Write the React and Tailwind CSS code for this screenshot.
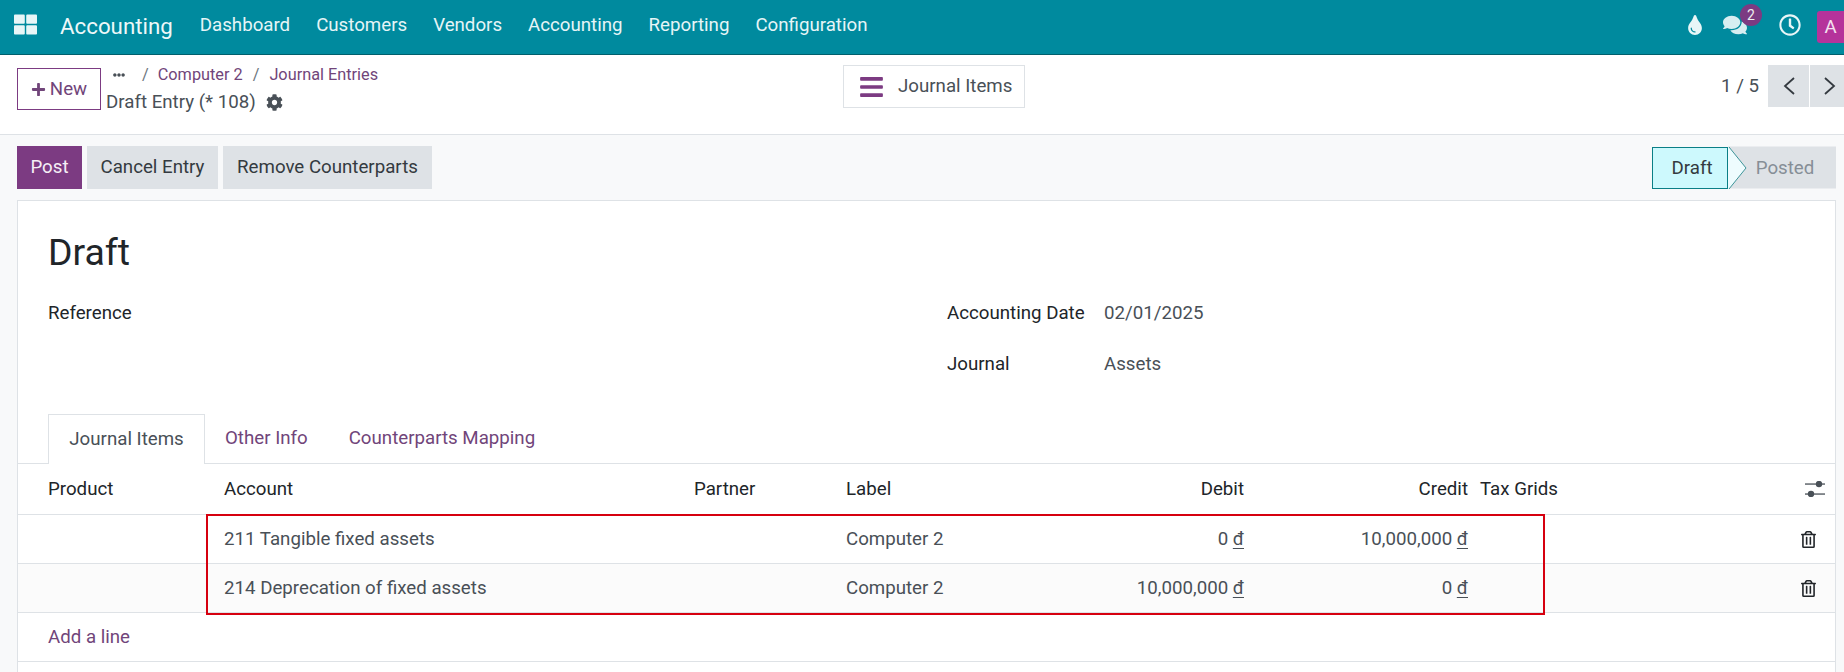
import React from "react";
import { FaThLarge, FaTint, FaComments, FaRegClock, FaCog, FaPlus, FaEllipsisH, FaBars, FaRegTrashAlt } from "react-icons/fa";

const navItems = ["Dashboard", "Customers", "Vendors", "Accounting", "Reporting", "Configuration"];
const cols = "grid grid-cols-[200px_470px_152px_210px_200px_224px_1fr_44px] items-center";

const rows = [
  { account: "211 Tangible fixed assets", debit: "0", credit: "10,000,000", bg: "bg-white" },
  { account: "214 Deprecation of fixed assets", debit: "10,000,000", credit: "0", bg: "bg-[#fbfbfb]" },
];

function Money({ v }) {
  return (
    <span>
      {v} <span className="underline underline-offset-[3px]">đ</span>
    </span>
  );
}

function Chevron({ dir }) {
  return (
    <svg width="14" height="20" viewBox="0 0 14 20" fill="none" stroke="#343a40" strokeWidth="1.8">
      <path d={dir === "left" ? "M12 2 L3 10 L12 18" : "M2 2 L11 10 L2 18"} />
    </svg>
  );
}

export default function App() {
  return (
    <div className="relative h-[672px] w-[1844px] overflow-hidden bg-[#f8f9fa] font-['Roboto',sans-serif] text-[18.7px] leading-[25px] text-[#495057]">
      <nav className="flex h-[55px] items-center border-b border-[#005f6c] bg-[#008a9e] text-[#e6f5f7]">
        <FaThLarge className="ml-[14px] h-[23px] w-[23px] -translate-y-[3px] text-[#e8f6f7]" />
        <span className="ml-[23px] -translate-y-[1px] text-[22.3px] text-[#edf8f9]">Accounting</span>
        <div className="ml-[27px] flex -translate-y-[2px] gap-[26px]">
          {navItems.map((n) => (
            <span key={n}>{n}</span>
          ))}
        </div>
        <div className="ml-auto flex -translate-y-[2px] items-center">
          <FaTint className="h-[20px] w-[20px] text-[#e8f6f7]" />
          <div className="relative ml-[18px]">
            <FaComments className="h-[24px] w-[24px] text-[#d6eef1]" />
            <span className="absolute -top-[9px] left-[17px] flex h-[22px] w-[22px] items-center justify-center rounded-full bg-[#7c3b82] text-[14px] text-[#eee]">2</span>
          </div>
          <FaRegClock className="ml-[32px] h-[22px] w-[22px] text-[#e8f6f7]" />
          <div className="ml-[16px] flex h-[32px] w-[27px] translate-y-[2px] items-center justify-center rounded-l-[3px] bg-[#b5339b] text-[#f3e3ef]">A</div>
        </div>
      </nav>

      <header className="flex h-[80px] items-start border-b border-[#dee2e6] bg-white pl-[17px] pt-[10px]">
        <button className="mt-[3px] flex h-[42px] w-[84px] items-center justify-center gap-[4px] border border-[#7c3b82] text-[#71457a]">
          <FaPlus className="h-[15px] w-[15px]" />
          New
        </button>
        <div className="ml-[5px] w-[341px]">
          <div className="-mt-[4px] flex h-[27px] items-center text-[16.3px] text-[#71457a]">
            <FaEllipsisH className="ml-[6px] h-[12px] w-[14px] text-[#495057]" />
            <span className="ml-[16px] text-[#6c757d]">/</span>
            <span className="ml-[9px]">Computer 2</span>
            <span className="ml-[10px] text-[#6c757d]">/</span>
            <span className="ml-[10px]">Journal Entries</span>
          </div>
          <div className="mt-[2px] flex items-center">
            <span>Draft Entry (* 108)</span>
            <FaCog className="ml-[10px] h-[17px] w-[17px] text-[#495057]" />
          </div>
        </div>
        <div className="ml-[396px] flex h-[43px] w-[182px] items-center border border-[#dee2e6] pl-[15px]">
          <FaBars className="h-[26px] w-[25px] text-[#7c3b82]" />
          <span className="ml-[14px]">Journal Items</span>
        </div>
        <div className="ml-auto flex items-center">
          <span className="mr-[9px]">1 / 5</span>
          <div className="flex h-[42px] w-[41px] items-center justify-center bg-[#dee2e6]">
            <Chevron dir="left" />
          </div>
          <div className="ml-[1px] flex h-[42px] w-[34px] items-center justify-center bg-[#dee2e6] pl-[6px]">
            <Chevron dir="right" />
          </div>
        </div>
      </header>

      <div className="flex h-[65px] items-start justify-between pl-[17px] pr-[8px] pt-[11px]">
        <div className="flex gap-[5px]">
          <button className="flex h-[43px] w-[65px] items-center justify-center bg-[#7c3b82] text-[#f5eff6]">Post</button>
          <button className="flex h-[43px] w-[131px] items-center justify-center bg-[#dee2e6] text-[#343a40]">Cancel Entry</button>
          <button className="flex h-[43px] w-[209px] items-center justify-center bg-[#dee2e6] text-[#343a40]">Remove Counterparts</button>
        </div>
        <div className="relative mt-[1px] flex h-[42px]">
          <div className="flex w-[76px] items-center justify-center border border-[#0a7f86] bg-[#cdf9fd] pl-[4px] text-[#343a40]">Draft</div>
          <div className="flex w-[108px] items-center justify-center bg-[#dee2e6] pl-[6px] -translate-y-[0.5px] text-[#868e96]">Posted</div>
          <svg className="absolute left-[76px] top-0" width="20" height="42" viewBox="0 0 20 42">
            <path d="M0 0 L1 0 L18 21 L1 42 L0 42 Z" fill="#eefcfe" />
            <path d="M1 0 L18 21 L1 42" fill="none" stroke="#3d9499" strokeWidth="1" />
          </svg>
        </div>
      </div>

      <main className="ml-[17px] w-[1819px] border border-[#dee2e6] bg-white">
        <div className="px-[30px] pt-[25px]">
          <h1 className="text-[37.4px] leading-[52px] text-[#212529]">Draft</h1>
          <div className="mt-[23px] flex h-[111px]">
            <div className="w-[899px] text-[#212529]">Reference</div>
            <div className="flex flex-col gap-[26px]">
              <div className="flex">
                <span className="w-[157px] text-[#212529]">Accounting Date</span>
                <span>02/01/2025</span>
              </div>
              <div className="flex">
                <span className="w-[157px] text-[#212529]">Journal</span>
                <span>Assets</span>
              </div>
            </div>
          </div>
        </div>

        <div className="mt-[2px] flex h-[50px] border-b border-[#dee2e6] pl-[30px]">
          <div className="flex h-[50px] w-[157px] items-center justify-center border border-b-0 border-[#dee2e6] bg-white">Journal Items</div>
          <div className="flex items-center pl-[20px] text-[#71457a]">Other Info</div>
          <div className="flex items-center pl-[41px] text-[#71457a]">Counterparts Mapping</div>
        </div>

        <div className={`${cols} h-[51px] border-b border-[#dee2e6] text-[#212529]`}>
          <span className="pl-[30px]">Product</span>
          <span className="px-[6px]">Account</span>
          <span className="px-[6px]">Partner</span>
          <span className="px-[6px]">Label</span>
          <span className="px-[6px] text-right">Debit</span>
          <span className="px-[6px] text-right">Credit</span>
          <span className="px-[6px]">Tax Grids</span>
          <span className="flex justify-center pl-[4px]">
            <svg width="20" height="16" viewBox="0 0 20 16" fill="#495057">
              <rect x="0" y="2.4" width="20" height="1.3" />
              <circle cx="14" cy="3" r="3.2" />
              <rect x="0" y="12.4" width="20" height="1.3" />
              <circle cx="6" cy="13" r="3.2" />
            </svg>
          </span>
        </div>

        {rows.map((r) => (
          <div key={r.account} className={`${cols} h-[49px] border-b border-[#dee2e6] ${r.bg}`}>
            <span />
            <span className="px-[6px]">{r.account}</span>
            <span />
            <span className="px-[6px]">Computer 2</span>
            <span className="px-[6px] text-right"><Money v={r.debit} /></span>
            <span className="px-[6px] text-right"><Money v={r.credit} /></span>
            <span />
            <span className="flex justify-center pr-[9px]">
              <FaRegTrashAlt className="h-[17px] w-[15px] text-[#212529]" />
            </span>
          </div>
        ))}

        <div className="flex h-[49px] items-center border-b border-[#dee2e6] pl-[30px] text-[#71457a]">Add a line</div>
        <div className="h-[40px]" />
      </main>

      <div className="absolute left-[206px] top-[514px] h-[101px] w-[1339px] border-2 border-[#d6000f]" />
    </div>
  );
}
